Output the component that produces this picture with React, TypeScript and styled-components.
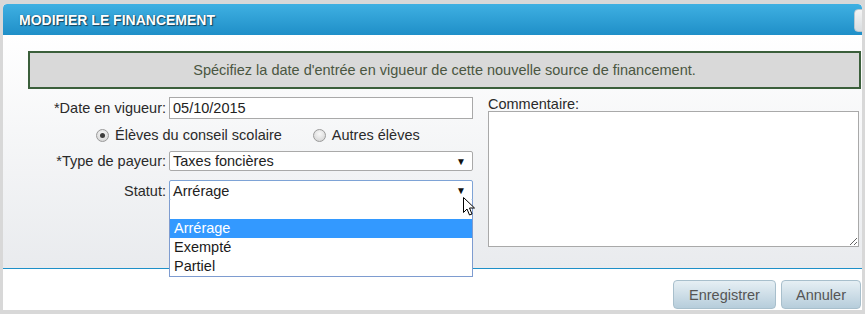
import React from "react";
import styled, { createGlobalStyle } from "styled-components";

const GlobalStyle = createGlobalStyle`
  html, body {
    margin: 0;
    padding: 0;
    background: #d8d8d8;
    width: 865px;
    height: 314px;
    overflow: hidden;
  }
  body {
    font-family: "Liberation Sans", Arial, sans-serif;
    font-size: 14.5px;
    color: #222;
  }
`;

const Frame = styled.div`
  padding: 4px 0 0 3px;
`;

const Dialog = styled.div`
  position: relative;
  width: 859px;
  height: 306px;
  background: #fff;
  border-radius: 4px 4px 0 0;
  overflow: hidden;
  display: flex;
  flex-direction: column;
`;

const Header = styled.div`
  position: relative;
  height: 31px;
  flex: none;
  display: flex;
  align-items: center;
  padding-left: 16px;
  background: linear-gradient(#3fb0e2, #1f8fc8);
  border-radius: 4px 4px 0 0;
`;

const Title = styled.h1`
  margin: 0;
  font-size: 14px;
  font-weight: bold;
  color: #fff;
  text-shadow: 1px 1px 1px #13425e, 0 0 1px #13425e;
`;

const CloseButton = styled.div`
  position: absolute;
  left: 851px;
  top: 5px;
  width: 22px;
  height: 21px;
  border-radius: 4px;
  border: 1px solid #b9c7cf;
  background: linear-gradient(#f4f4f4, #d9dde0);
`;

const Body = styled.div`
  height: 233px;
  flex: none;
  padding-top: 16px;
  box-sizing: border-box;
  background: linear-gradient(#ffffff, #e9ebee);
  position: relative;
  z-index: 2;
`;

const Notice = styled.div`
  margin-left: 25px;
  width: 833px;
  height: 38px;
  box-sizing: border-box;
  border: 2px solid #3b5f3b;
  background: #d9d9d9;
  color: #4a5641;
  display: flex;
  align-items: center;
  justify-content: center;
`;

const FormArea = styled.div`
  display: grid;
  grid-template-columns: 470px 371px;
  column-gap: 15px;
  margin-top: 8px;
`;

const Fields = styled.div`
  display: flex;
  flex-direction: column;
`;

const FieldRow = styled.div<{ $h: number; $mt?: number }>`
  display: grid;
  grid-template-columns: 163px 304px;
  column-gap: 3px;
  height: ${(p) => p.$h}px;
  margin-top: ${(p) => p.$mt ?? 0}px;
  align-items: center;
`;

const Label = styled.label`
  text-align: right;
  color: #2a2a2a;
  white-space: nowrap;
`;

const TextBox = styled.div`
  height: 100%;
  box-sizing: border-box;
  border: 1px solid #a9a9a9;
  background: #fff;
  padding-left: 3px;
  display: flex;
  align-items: center;
`;

const Select = styled.div<{ $focused?: boolean }>`
  position: relative;
  height: 100%;
  box-sizing: border-box;
  border: 1px solid ${(p) => (p.$focused ? "#7ea3d6" : "#a9a9a9")};
  border-radius: 2px;
  background: #fff;
  padding: 0 0 0 3px;
  display: flex;
  align-items: center;
  justify-content: space-between;
`;

const Arrow = styled.span`
  font-size: 10px;
  color: #111;
  margin-right: 6px;
`;

const OptionList = styled.ul`
  position: absolute;
  left: -1px;
  right: -1px;
  top: 100%;
  margin: 0;
  padding: 0;
  list-style: none;
  background: #fff;
  border: 1px solid #7e9cd0;
  border-top: none;
  z-index: 5;
`;

const Option = styled.li<{ $active?: boolean }>`
  height: 19px;
  line-height: 19px;
  padding-left: 4px;
  background: ${(p) => (p.$active ? "#3399ff" : "#fff")};
  color: ${(p) => (p.$active ? "#fff" : "#1a1a1a")};
`;

const RadioRow = styled.div`
  height: 32px;
  display: flex;
  align-items: center;
  padding-left: 93px;
  gap: 31px;
`;

const RadioItem = styled.label`
  display: flex;
  align-items: center;
  gap: 6px;
  color: #2a2a2a;
`;

const RadioDot = styled.span<{ $checked?: boolean }>`
  width: 11px;
  height: 11px;
  border-radius: 50%;
  border: 1px solid #9a9a9a;
  background: radial-gradient(circle at 50% 35%, #f8f8f8, #cfcfcf);
  display: flex;
  align-items: center;
  justify-content: center;

  &::after {
    content: "";
    width: 5px;
    height: 5px;
    border-radius: 50%;
    background: ${(p) => (p.$checked ? "#3c3c3c" : "transparent")};
  }
`;

const CommentColumn = styled.div`
  display: flex;
  flex-direction: column;
`;

const CommentLabel = styled.div`
  height: 14px;
  line-height: 14px;
  color: #2a2a2a;
`;

const CommentBox = styled.textarea`
  width: 371px;
  height: 136px;
  box-sizing: border-box;
  border: 1px solid #a9a9a9;
  background: #fff;
  margin: 0;
  padding: 2px;
  font: inherit;
  outline: none;
`;

const Cursor = styled.svg`
  position: absolute;
  left: 460px;
  top: 193px;
  z-index: 10;
`;

const Footer = styled.div`
  flex: 1;
  border-top: 1px solid #1e90c8;
  display: flex;
  justify-content: flex-end;
  align-items: flex-start;
  padding: 11px 1px 0 0;
  gap: 5px;
`;

const Button = styled.button<{ $w: number }>`
  width: ${(p) => p.$w}px;
  height: 29px;
  border: 1px solid #a8bfcc;
  border-radius: 4px;
  background: linear-gradient(#e6eff4, #b6cddb);
  color: #555;
  font: inherit;
  padding: 0;
`;

const App: React.FC = () => {
  return (
    <>
      <GlobalStyle />
      <Frame>
        <Dialog>
          <Header>
            <Title>MODIFIER LE FINANCEMENT</Title>
            <CloseButton />
          </Header>
          <Body>
            <Notice>
              Spécifiez la date d'entrée en vigueur de cette nouvelle source de financement.
            </Notice>
            <FormArea>
              <Fields>
                <FieldRow $h={22}>
                  <Label>*Date en vigueur:</Label>
                  <TextBox>05/10/2015</TextBox>
                </FieldRow>
                <RadioRow>
                  <RadioItem>
                    <RadioDot $checked />
                    Élèves du conseil scolaire
                  </RadioItem>
                  <RadioItem>
                    <RadioDot />
                    Autres élèves
                  </RadioItem>
                </RadioRow>
                <FieldRow $h={20}>
                  <Label>*Type de payeur:</Label>
                  <Select>
                    Taxes foncières
                    <Arrow>▼</Arrow>
                  </Select>
                </FieldRow>
                <FieldRow $h={21} $mt={9}>
                  <Label>Statut:</Label>
                  <Select $focused>
                    Arrérage
                    <Arrow>▼</Arrow>
                    <OptionList>
                      <Option>&nbsp;</Option>
                      <Option $active>Arrérage</Option>
                      <Option>Exempté</Option>
                      <Option>Partiel</Option>
                    </OptionList>
                  </Select>
                </FieldRow>
              </Fields>
              <CommentColumn>
                <CommentLabel>Commentaire:</CommentLabel>
                <CommentBox />
              </CommentColumn>
            </FormArea>
          </Body>
          <Footer>
            <Button $w={103}>Enregistrer</Button>
            <Button $w={80}>Annuler</Button>
          </Footer>
          <Cursor width="13" height="20" viewBox="0 0 13 20">
            <path
              d="M0.5 0.5 L0.5 15.5 L4 12 L6.5 18 L9 17 L6.5 11 L11.5 11 Z"
              fill="#fff"
              stroke="#000"
              strokeWidth="1"
              strokeLinejoin="miter"
            />
          </Cursor>
        </Dialog>
      </Frame>
    </>
  );
};

export default App;
